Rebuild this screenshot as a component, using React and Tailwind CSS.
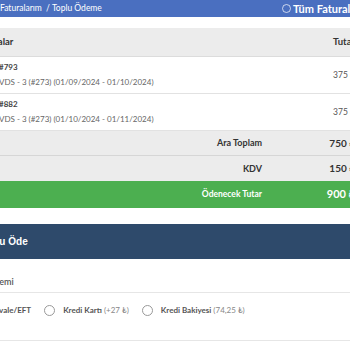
import React from 'react';

const rows = [
  { id: '#793', desc: 'VDS - 3 (#273) (01/09/2024 - 01/10/2024)', amount: '375 ₺' },
  { id: '#882', desc: 'VDS - 3 (#273) (01/10/2024 - 01/11/2024)', amount: '375 ₺' },
];

const methods = [
  { label: 'Kredi Kartı', extra: '(+27 ₺)' },
  { label: 'Kredi Bakiyesi', extra: '(74,25 ₺)' },
];

export default function App() {
  return (
    <div className="w-[350px] h-[350px] overflow-hidden bg-white font-['Lato',sans-serif] text-[#333]">
      {/* breadcrumb bar */}
      <div className="h-[17px] bg-[#4a6fc0] flex items-center text-white overflow-hidden">
        <div className="w-[282px] shrink-0 text-[8.5px] whitespace-nowrap">Faturalarım &nbsp;/ Toplu Ödeme</div>
        <div className="flex items-center gap-[2px] shrink-0 whitespace-nowrap">
          <span className="w-[9px] h-[9px] rounded-full border border-white/70"></span>
          <span className="text-[11px] font-bold leading-[12px]">Tüm Faturalarım</span>
        </div>
      </div>

      {/* table */}
      <div className="mt-[11px] mr-[-5px] ml-[-24px]">
        <div className="h-[29px] bg-[#ececec] border-b border-[#dcdcdc] flex items-center justify-between text-[9.5px] font-bold">
          <span>Faturalar</span>
          <span>Tutar</span>
        </div>
        {rows.map((r) => (
          <div key={r.id} className="h-[37px] border-b border-[#e2e2e2] flex items-center justify-between">
            <div className="pl-[23px] leading-[15px]">
              <div className="text-[8px] font-bold text-[#444]">{r.id}</div>
              <div className="text-[8px] text-[#666] whitespace-nowrap">{r.desc}</div>
            </div>
            <span className="text-[8.5px] text-[#555]">{r.amount}</span>
          </div>
        ))}
        <div className="h-[25px] bg-[#ececec] border-b border-[#d6d6d6] flex items-center font-bold">
          <span className="flex-1 text-right pr-[3px] text-[9px]">Ara Toplam</span>
          <span className="w-[90px] text-right text-[10px]">750 ₺</span>
        </div>
        <div className="h-[25px] bg-[#ececec] flex items-center font-bold">
          <span className="flex-1 text-right pr-[3px] text-[9px]">KDV</span>
          <span className="w-[90px] text-right text-[10px]">150 ₺</span>
        </div>
        <div className="h-[27px] bg-[#4caf50] flex items-center text-white font-bold">
          <span className="flex-1 text-right pr-[3px] text-[8.5px]">Ödenecek Tutar</span>
          <span className="w-[90px] text-right text-[11px]">900 ₺</span>
        </div>
      </div>

      {/* payment card */}
      <div className="mt-[16px] h-[35px] bg-[#2e4a6b] flex items-center">
        <span className="ml-[-21px] text-white text-[10px] font-bold font-['Liberation_Sans',sans-serif]">Toplu Öde</span>
      </div>
      <div className="pt-[17px] pb-[4px] border-b border-[#e6e6e6] text-[9px] leading-[12px]">
        <div className="ml-[-50px] text-[#555] font-semibold whitespace-nowrap">Ödeme Yöntemi</div>
      </div>
      <div className="h-[48px] pt-[11px] border-b border-[#e6e6e6] flex items-start gap-[13px] text-[8px] leading-[12px]">
        <span className="ml-[-11px] font-bold text-[#555] whitespace-nowrap">Havale/EFT</span>
        {methods.map((m) => (
          <label key={m.label} className="flex items-center gap-[8px] whitespace-nowrap">
            <span className="w-[11px] h-[11px] rounded-full border border-[#999] bg-white"></span>
            <span className="font-bold text-[#555]">{m.label} <span className="font-normal text-[#888]">{m.extra}</span></span>
          </label>
        ))}
      </div>
    </div>
  );
}
